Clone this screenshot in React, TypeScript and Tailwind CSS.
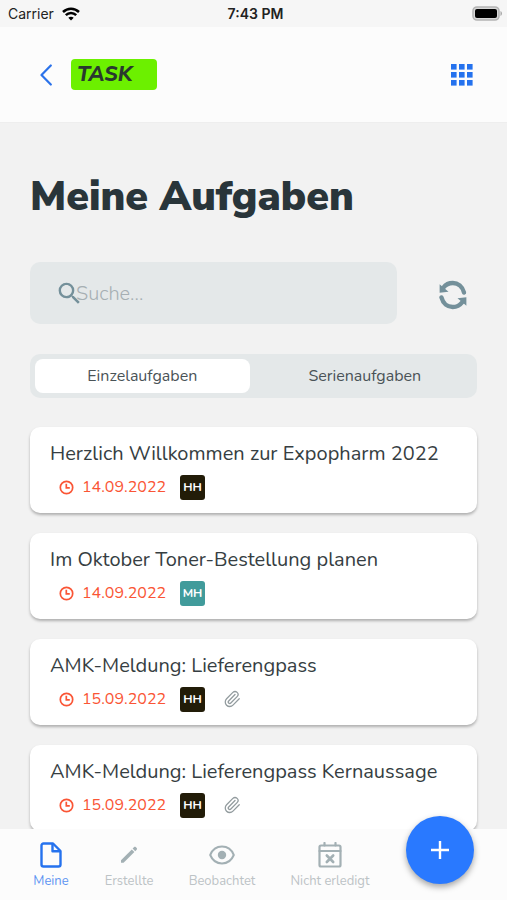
import React, { useState } from "react";
import clsx from "clsx";
import { MdSearch } from "react-icons/md";
import { Paperclip } from "lucide-react";

interface Task {
    id: number;
    title: string;
    date: string;
    initials: string;
    color: string;
    hasAttachment: boolean;
}

const tasks: Task[] = [
    { id: 1, title: "Herzlich Willkommen zur Expopharm 2022", date: "14.09.2022", initials: "HH", color: "bg-[#221c08]", hasAttachment: false },
    { id: 2, title: "Im Oktober Toner-Bestellung planen", date: "14.09.2022", initials: "MH", color: "bg-[#419b9b]", hasAttachment: false },
    { id: 3, title: "AMK-Meldung: Lieferengpass", date: "15.09.2022", initials: "HH", color: "bg-[#221c08]", hasAttachment: true },
    { id: 4, title: "AMK-Meldung: Lieferengpass Kernaussage", date: "15.09.2022", initials: "HH", color: "bg-[#221c08]", hasAttachment: true },
];

const WifiIcon = () => (
    <svg width="18" height="14" viewBox="0 0 18 14" fill="none" stroke="#000" strokeWidth="2.5">
        <path d="M1 5C5.6.6 12.4.6 17 5" />
        <path d="M3.8 8.1C6.8 5.2 11.2 5.2 14.2 8.1" />
        <path d="M9 13.4 6.3 10.7C7.8 9.3 10.2 9.3 11.7 10.7Z" fill="#000" stroke="none" />
    </svg>
);

const BatteryIcon = () => (
    <svg width="31" height="15" viewBox="0 0 31 15">
        <rect x="1" y="1" width="26" height="13" rx="4" fill="#d8d8d8" stroke="#b4b4b4" strokeWidth="1.6" />
        <rect x="3" y="3" width="22" height="9" rx="2" fill="#000" />
        <path d="M28.5 5C30.4 5.8 30.4 9.2 28.5 10Z" fill="#a3a3a3" />
    </svg>
);

const ChevronIcon = () => (
    <svg width="12" height="22" viewBox="0 0 12 22" fill="none" stroke="#2b72ea" strokeWidth="2.2" strokeLinecap="round" strokeLinejoin="round">
        <path d="M10.8 1.5 1.5 11 10.8 20.5" />
    </svg>
);

const GridIcon = () => (
    <svg width="22" height="22" viewBox="0 0 22 22" fill="#2572ee">
        {[0, 8, 16].map((y) =>
            [0, 8, 16].map((x) => <rect key={`${x}-${y}`} x={x} y={y} width="5.6" height="5.6" />)
        )}
    </svg>
);

const RefreshIcon = () => (
    <svg width="28" height="30" viewBox="0 0 28 30" fill="none" stroke="#74909a" strokeWidth="4.4">
        <path d="M25 12.5C23.5 6.5 18.8 3 13.8 3C9.8 3 6.5 4.8 4.5 7.5" strokeLinecap="round" />
        <path d="M2.5 17.5C4 23.5 8.7 27 13.7 27C17.7 27 21 25.2 23 22.5" strokeLinecap="round" />
        <path d="M.6 4.2V12.8L9.5 11.7Z" fill="#74909a" stroke="none" />
        <path d="M27.4 25.8V17.2L18.5 18.3Z" fill="#74909a" stroke="none" />
    </svg>
);

const ClockIcon = () => (
    <svg width="15" height="15" viewBox="0 0 15 15" fill="none" stroke="#fa5535" strokeWidth="1.7">
        <circle cx="7.5" cy="7.5" r="6.2" />
        <path d="M7.3 3.8V7.8H10.8" />
    </svg>
);

const FileIcon = () => (
    <svg width="22" height="26" viewBox="0 0 22 26" fill="none" stroke="currentColor" strokeWidth="2.4" strokeLinejoin="round">
        <path d="M13 1.5H3.5C2.4 1.5 1.5 2.4 1.5 3.5V22.5C1.5 23.6 2.4 24.5 3.5 24.5H18.5C19.6 24.5 20.5 23.6 20.5 22.5V9Z" />
        <path d="M12.5 2V9.2H20" />
    </svg>
);

const PencilIcon = () => (
    <svg width="18" height="18" viewBox="0 0 18 18" fill="currentColor">
        <path d="M1 14.2 11.8 3.4 14.4 6 3.6 16.8H1Z" />
        <path d="M12.6 2.6 14.1 1.1C14.6.6 15.2.6 15.7 1.1L16.7 2.1C17.2 2.6 17.2 3.2 16.7 3.7L15.2 5.2Z" />
    </svg>
);

const EyeIcon = () => (
    <svg width="26" height="20" viewBox="0 0 26 20" fill="none" stroke="currentColor" strokeWidth="2">
        <path d="M1.2 10C5.8-1.2 20.2-1.2 24.8 10C20.2 21.2 5.8 21.2 1.2 10Z" strokeLinejoin="round" />
        <circle cx="13" cy="10" r="4.2" fill="currentColor" stroke="none" />
    </svg>
);

const CalendarXIcon = () => (
    <svg width="24" height="26" viewBox="0 0 24 26" fill="none" stroke="currentColor" strokeWidth="2.2" strokeLinecap="round">
        <rect x="1.5" y="3.5" width="21" height="21" rx="1.5" />
        <path d="M1.5 9H22.5M6.5 1V3.5M17.5 1V3.5" />
        <path d="M8.8 13.5 15.2 20M15.2 13.5 8.8 20" strokeWidth="2.6" />
    </svg>
);

const StatusBar: React.FC = () => (
    <div className="grid h-[27px] shrink-0 grid-cols-3 items-center bg-[#f6f6f6] pr-1 pl-2 font-[Inter,sans-serif] text-[14px] text-[#222]">
        <div className="flex items-center gap-2">
            <span>Carrier</span>
            <WifiIcon />
        </div>
        <span className="text-center font-semibold">7:43 PM</span>
        <div className="flex justify-end">
            <BatteryIcon />
        </div>
    </div>
);

const TaskCard: React.FC<{ task: Task }> = ({ task }) => (
    <li className="flex h-[86px] shrink-0 flex-col gap-1 rounded-[10px] bg-white px-5 pt-3 shadow-[0_2px_3px_rgba(0,0,0,0.28)]">
        <h2 className="truncate text-[20px] leading-[30px] text-[#363e42]">{task.title}</h2>
        <div className="flex h-7 items-center pl-[9px]">
            <ClockIcon />
            <time className="ml-2 w-[98px] text-[16px] text-[#fa5535]">{task.date}</time>
            <span className={clsx("flex size-[25px] items-center justify-center rounded-[3px] text-[12px] font-bold text-white", task.color)}>
                {task.initials}
            </span>
            {task.hasAttachment && <Paperclip className="ml-[18px] text-[#929b9e]" size={18} strokeWidth={1.7} />}
        </div>
    </li>
);

const navItems = [
    { label: "Meine", icon: <FileIcon />, width: "w-[76px]" },
    { label: "Erstellte", icon: <PencilIcon />, width: "w-[80px]" },
    { label: "Beobachtet", icon: <EyeIcon />, width: "w-[106px]" },
    { label: "Nicht erledigt", icon: <CalendarXIcon />, width: "w-[110px]" },
];

const App: React.FC = () => {
    const [tab, setTab] = useState("Einzelaufgaben");
    const [activeNav, setActiveNav] = useState("Meine");
    const [search, setSearch] = useState("");

    return (
        <div className="relative flex h-screen flex-col overflow-hidden bg-[#f2f2f2] font-['Nunito','Open_Sans',sans-serif]">
            <StatusBar />

            <header className="flex h-24 shrink-0 items-center border-b border-[#eeeeee] bg-[#fcfcfc] pr-[34px] pl-10">
                <button type="button" aria-label="Zurück">
                    <ChevronIcon />
                </button>
                <span className="ml-[19px] flex h-[31px] w-[86px] items-center rounded-[4px] bg-[#6cf000] pl-1.5 font-['Nunito_Sans','Nunito','Open_Sans',sans-serif] text-[21px] font-extrabold text-[#29382f] italic">
                    TASK
                </span>
                <button type="button" aria-label="Apps" className="ml-auto">
                    <GridIcon />
                </button>
            </header>

            <main className="flex min-h-0 flex-1 flex-col overflow-hidden px-[30px] pt-12">
                <h1 className="font-['Nunito_Sans','Nunito','Open_Sans',sans-serif] text-[41px] leading-[52px] font-black text-[#29353a]">
                    Meine Aufgaben
                </h1>

                <div className="mt-[39px] flex items-center">
                    <label className="flex h-[62px] min-w-0 flex-1 items-center rounded-[10px] bg-[#e4e8e9] pl-[25px]">
                        <MdSearch className="shrink-0 text-[#74909a]" size={29} />
                        <input
                            type="text"
                            aria-label="Suche"
                            placeholder="Suche..."
                            value={search}
                            onChange={(e) => setSearch(e.target.value)}
                            className="-ml-2 w-full min-w-0 bg-transparent pt-0.5 text-[20px] font-light text-[#363e42] outline-none placeholder:text-[#a6afb3]"
                        />
                    </label>
                    <button type="button" aria-label="Aktualisieren" className="mr-[10px] ml-[42px] pt-1">
                        <RefreshIcon />
                    </button>
                </div>

                <div className="mt-[30px] flex h-11 shrink-0 gap-2 rounded-[10px] bg-[#e4e8e9] p-[5px]">
                    {["Einzelaufgaben", "Serienaufgaben"].map((name) => (
                        <button
                            key={name}
                            type="button"
                            onClick={() => setTab(name)}
                            className={clsx(
                                "flex-1 rounded-[8px] text-[16px] text-[#4a5357]",
                                tab === name && "bg-white"
                            )}
                        >
                            {name}
                        </button>
                    ))}
                </div>

                <ul className="mt-[29px] flex flex-col gap-5">
                    {tasks.map((task) => (
                        <TaskCard key={task.id} task={task} />
                    ))}
                </ul>
            </main>

            <nav className="z-10 flex h-[71px] shrink-0 bg-[#fcfcfc] pl-[13px]">
                {navItems.map((item) => (
                    <button
                        key={item.label}
                        type="button"
                        onClick={() => setActiveNav(item.label)}
                        className={clsx(
                            "flex shrink-0 flex-col items-center pt-3",
                            item.width,
                            activeNav === item.label ? "text-[#2572ee]" : "text-[#a3b0b4]"
                        )}
                    >
                        <span className="flex h-7 items-center">{item.icon}</span>
                        <span className={clsx("text-[13px] leading-6", activeNav === item.label ? "text-[#5f95f2]" : "text-[#bcc3c6]")}>
                            {item.label}
                        </span>
                    </button>
                ))}
            </nav>

            <button
                type="button"
                aria-label="Neue Aufgabe"
                className="absolute right-[33px] bottom-4 z-20 flex size-[68px] items-center justify-center rounded-full bg-[#2979ff] shadow-[0_3px_6px_rgba(0,0,0,0.35)]"
            >
                <svg width="20" height="20" viewBox="0 0 20 20" stroke="#fff" strokeWidth="2.4">
                    <path d="M10 1V19M1 10H19" />
                </svg>
            </button>
        </div>
    );
};

export default App;
